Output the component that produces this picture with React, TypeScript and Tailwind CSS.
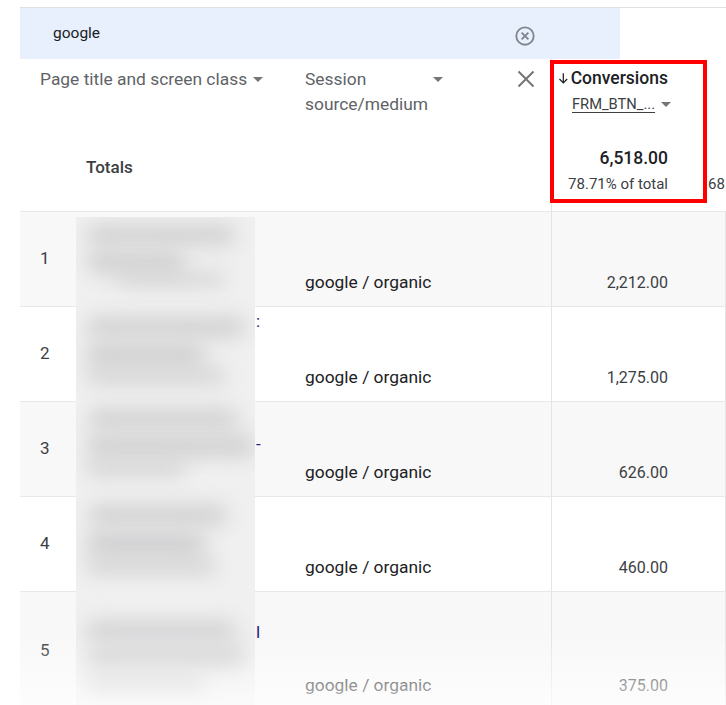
import React from "react";

type Row = { n: number; source: string; value: string; tall?: boolean; frag?: string; fragTop?: number };

const rows: Row[] = [
  { n: 1, source: "google / organic", value: "2,212.00" },
  { n: 2, source: "google / organic", value: "1,275.00", frag: ":", fragTop: 2 },
  { n: 3, source: "google / organic", value: "626.00", frag: "-", fragTop: 30 },
  { n: 4, source: "google / organic", value: "460.00" },
  { n: 5, source: "google / organic", value: "375.00", tall: true, frag: "l", fragTop: 28 },
];

const Caret = () => (
  <svg width="10" height="5" viewBox="0 0 10 5" className="shrink-0">
    <path d="M0 0h10L5 5z" fill="#757575" />
  </svg>
);

// blurred blobs that hide page titles
const blobs = [
  { top: 8, left: 10, w: 150, h: 20 },
  { top: 34, left: 10, w: 100, h: 22 },
  { top: 56, left: 40, w: 110, h: 12 },
  { top: 100, left: 10, w: 160, h: 20 },
  { top: 126, left: 10, w: 120, h: 24 },
  { top: 152, left: 10, w: 140, h: 14 },
  { top: 192, left: 12, w: 150, h: 20 },
  { top: 218, left: 10, w: 170, h: 22 },
  { top: 244, left: 10, w: 100, h: 14 },
  { top: 288, left: 12, w: 140, h: 20 },
  { top: 314, left: 10, w: 120, h: 26 },
  { top: 342, left: 10, w: 130, h: 14 },
  { top: 404, left: 10, w: 150, h: 18 },
  { top: 428, left: 10, w: 160, h: 24 },
  { top: 458, left: 10, w: 120, h: 18 },
];

export default function App() {
  return (
    <div className="relative w-[726px] h-[705px] overflow-hidden bg-white font-['Roboto','Liberation_Sans',sans-serif] text-[#202124]">
      <div className="ml-[20px] mt-[7px] border-t border-[#e0e0e0]">
        {/* Search */}
        <div className="flex h-[51px]">
          <div className="w-[600px] bg-[#e8f0fe] flex items-center pl-[33px] pr-[84px]">
            <span className="text-[15.5px]">google</span>
            <svg width="22" height="22" viewBox="0 0 24 24" className="ml-auto mt-[5px]">
              <circle cx="12" cy="12" r="9.5" fill="none" stroke="#80868b" strokeWidth="2" />
              <path d="M8.3 8.3l7.4 7.4M15.7 8.3l-7.4 7.4" stroke="#80868b" strokeWidth="2" />
            </svg>
          </div>
        </div>

        {/* Header */}
        <div className="flex h-[152px]">
          <div className="w-[265px] flex flex-col pt-[8px]">
            <div className="pl-[20px] flex items-center gap-[6px] text-[17.4px] leading-6 text-[#5f6368]">
              <span>Page title and screen class</span>
              <Caret />
            </div>
            <div className="mt-auto pb-[32px] pl-[66px] text-[17px] leading-6 font-medium text-[#3c4043]">Totals</div>
          </div>
          <div className="w-[266px] flex items-start pl-[20px] pr-[16px] pt-[8px]">
            <span className="w-[128px] text-[17.4px] leading-[25px] text-[#5f6368]">
              Session source/medium
            </span>
            <div className="h-6 flex items-center">
              <Caret />
            </div>
            <svg width="18" height="18" viewBox="0 0 18 18" className="ml-auto mt-[3px]">
              <path d="M1.5 1.5l15 15M16.5 1.5l-15 15" stroke="#757575" strokeWidth="2" />
            </svg>
          </div>
          <div className="w-[139px] border-l border-[#e4e4e4] flex flex-col pl-[6px] pr-[22px] pt-[7px]">
            <div className="flex items-center gap-[2px] text-[17.5px] leading-6 font-medium text-[#202124]">
              <svg width="11" height="12" viewBox="0 0 11 12">
                <path d="M5.5 1v10M1.5 7l4 4 4-4" fill="none" stroke="#202124" strokeWidth="1.3" />
              </svg>
              <span>Conversions</span>
            </div>
            <div className="flex items-center gap-[6px] pl-[14px] mt-[4px]">
              <span className="text-[14.7px] leading-5 underline underline-offset-[3px] text-[#3c4043]">FRM_BTN_...</span>
              <Caret />
            </div>
            <div className="mt-auto text-right text-[17.5px] leading-6 font-medium">6,518.00</div>
            <div className="text-right text-[15px] leading-5 text-[#3c4043] mt-[4px] mb-[17px]">78.71% of total</div>
          </div>
          <div className="flex-1 flex flex-col justify-end pl-[18px] pb-[17px]">
            <span className="text-[15px] leading-5 text-[#3c4043]">68</span>
          </div>
        </div>

        {/* Rows */}
        {rows.map((r) => (
          <div
            key={r.n}
            className={`flex border-t border-[#e8e8e8] ${r.tall ? "h-[118px]" : "h-[95px]"} ${
              r.n % 2 ? "bg-[#f8f8f8]" : "bg-white"
            }`}
          >
            <div className="w-[56px] pl-[20px] flex items-center text-[17px] text-[#3c4043]">{r.n}</div>
            <div className="w-[209px] relative text-[17px] leading-6 text-[#1a237e]">
              {r.frag && (
                <span className="block pl-[180px]" style={{ paddingTop: r.fragTop ?? 0 }}>
                  {r.frag}
                </span>
              )}
            </div>
            <div className="w-[266px] pl-[20px] flex items-end pb-[12px] text-[17.4px] leading-6 text-[#202124]">
              {r.source}
            </div>
            <div className="w-[174px] border-l border-[#e4e4e4] flex items-end justify-end pr-[57px] pb-[11px] text-[16px] leading-6 text-[#3c4043]">
              {r.value}
            </div>
            <div className="flex-1 border-l border-[#e4e4e4]" />
          </div>
        ))}
      </div>

      {/* redacted titles */}
      <div className="absolute left-[76px] top-[217px] w-[179px] h-[488px] bg-[#f0f0f1] overflow-hidden">
        {blobs.map((b, i) => (
          <div
            key={i}
            className="absolute bg-[#d0d0d1] rounded-full blur-[10px]"
            style={{ top: b.top, left: b.left, width: b.w, height: b.h }}
          />
        ))}
      </div>

      {/* highlight */}
      <div className="absolute left-[550px] top-[60px] w-[157px] h-[143px] border-[4px] border-[#ff0000]" />

      {/* bottom fade */}
      <div className="absolute left-0 right-0 bottom-0 h-[70px] bg-gradient-to-b from-white/0 to-white/70" />
    </div>
  );
}
